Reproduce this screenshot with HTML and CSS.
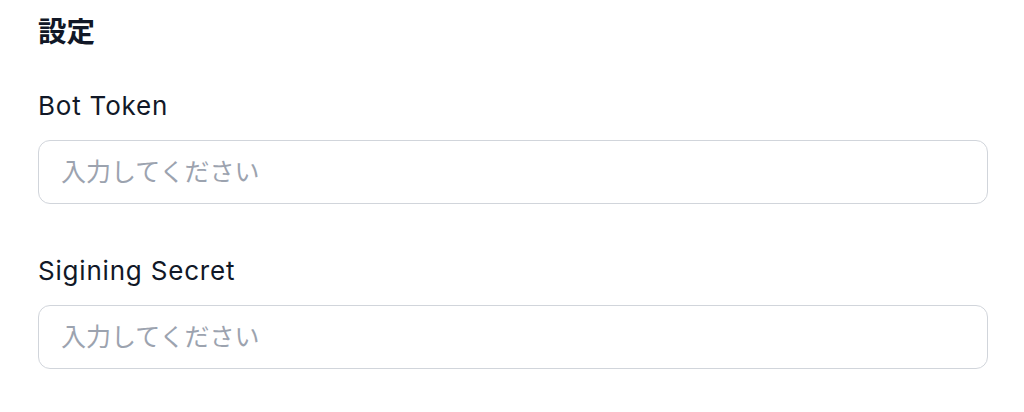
FILE: index.html
```html
<!DOCTYPE html>
<html lang="ja">
<head>
<meta charset="utf-8">
<link rel="stylesheet" href="styles.css">
</head>
<body>
<main class="page">
  <h2 class="title">設定</h2>
  <div class="field">
    <label class="label" for="token">Bot Token</label>
    <input class="input" id="token" type="text" placeholder="入力してください">
  </div>
  <div class="field">
    <label class="label" for="secret">Sigining Secret</label>
    <input class="input" id="secret" type="text" placeholder="入力してください">
  </div>
</main>
</body>
</html>
```
FILE: styles.css
```css
html, body {
  margin: 0;
  padding: 0;
  background: #ffffff;
}
.page {
  padding: 15px 36px 0 38px;
  font-family: "Inter", "Noto Sans CJK JP", sans-serif;
  color: #111827;
}
.title {
  margin: 0;
  font-size: 28.5px;
  line-height: 34px;
  font-weight: 700;
}
.field {
  display: flex;
  flex-direction: column;
  gap: 16px;
  margin-top: 39px;
}
.field + .field {
  margin-top: 49px;
}
.label {
  font-size: 26px;
  line-height: 36px;
  font-weight: 400;
  letter-spacing: 0.8px;
  color: #111827;
}
.input {
  box-sizing: border-box;
  height: 64px;
  width: 100%;
  border: 1px solid #d1d5db;
  border-radius: 12px;
  padding: 0 22px;
  font-family: "Inter", "Noto Sans CJK JP", sans-serif;
  font-size: 25px;
  color: #111827;
  background: #fff;
  outline: none;
}
.input::placeholder {
  color: #9ca3af;
}
```
